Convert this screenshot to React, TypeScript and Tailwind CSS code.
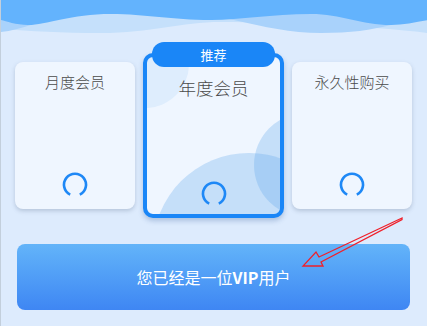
import React from 'react';

const FONT = { fontFamily: '"Noto Sans CJK SC", "Noto Sans", sans-serif' };

function Spinner() {
  // ring with a gap at the bottom
  return (
    <svg width="28" height="28" viewBox="0 0 28 28">
      <path
        d="M9.2 23.6 A11 11 0 1 1 18.8 23.6"
        fill="none"
        stroke="#1e88f6"
        strokeWidth="2.6"
        strokeLinecap="butt"
      />
    </svg>
  );
}

function Waves() {
  return (
    <svg className="absolute left-0 top-0" width="427" height="40" viewBox="0 0 427 40">
      <path d="M0,29 C30,31 60,33 100,33 C150,33 180,22 220,22 C280,22 370,26 427,33 V0 H0 Z" fill="#c5e0fb" />
      <path
        d="M0,32 C10,31 20,28 30,25 C60,16 100,8 150,8 C210,8 260,33 320,33 C350,33 370,30 390,25 C405,21 415,18 427,16 V0 H0 Z"
        fill="#a9d2fb"
      />
      <path
        d="M0,0 H427 V20 C415,22 402,25 390,25 C360,25 340,14 310,14 C270,14 240,20 210,20 C170,20 145,14 110,14 C70,14 45,25 27,25 C15,25 5,21 0,20 Z"
        fill="#63b3fd"
      />
    </svg>
  );
}

function SideCard({ title }: { title: string }) {
  return (
    <div className="flex h-[147px] w-[120px] flex-col items-center rounded-lg bg-[#eff6ff] pb-[10px] pt-[9px] shadow-[0_2px_4px_rgba(90,110,140,0.3)]">
      <span className="text-[15px] font-light text-[#4a4a4a]">{title}</span>
      <div className="mt-auto">
        <Spinner />
      </div>
    </div>
  );
}

export default function App() {
  return (
    <div
      className="relative h-[326px] w-[427px] overflow-hidden border-l border-[#c3cfdc] bg-[#ddebfd]"
      style={FONT}
    >
      <Waves />

      <div className="relative flex items-center gap-[8px] pl-[14px] pt-[53px]">
        <SideCard title="月度会员" />

        <div className="relative h-[165px] w-[141px] rounded-[10px] border-[4px] border-[#1a86f7] bg-[#eff6ff] shadow-[0_3px_5px_rgba(60,100,160,0.3)]">
          <div className="absolute inset-0 overflow-hidden rounded-[6px]">
            <div className="absolute left-[-46px] top-[-37px] h-[88px] w-[88px] rounded-full bg-[rgba(100,170,235,0.12)]" />
            <div className="absolute left-[6px] top-[96px] h-[192px] w-[192px] rounded-full bg-[rgba(100,170,235,0.3)]" />
            <div className="absolute left-[107px] top-[56px] h-[104px] w-[104px] rounded-full bg-[rgba(100,170,235,0.3)]" />
          </div>
          <div className="absolute left-[5px] top-[-15px] flex h-[25px] w-[123px] items-center justify-center rounded-[12px] bg-[#1a86f7] text-[13px] text-white">
            推荐
          </div>
          <div className="relative flex h-full flex-col items-center pb-[6px] pt-[18px]">
            <span className="text-[17.5px] font-light text-[#4a4a4a]">年度会员</span>
            <div className="mt-auto">
              <Spinner />
            </div>
          </div>
        </div>

        <SideCard title="永久性购买" />
      </div>

      <div className="relative ml-[16px] mt-[26px] flex h-[66px] w-[393px] items-center justify-center rounded-lg bg-gradient-to-b from-[#63b4f9] to-[#3f86f3] text-[16px] text-white">
        <span>
          您已经是一位<span className="font-bold">VIP</span>用户
        </span>
      </div>

      <svg className="absolute left-0 top-0" width="427" height="326" viewBox="0 0 427 326">
        <polygon
          points="401,218 318,257 315,252 302,266 322,266 320,262 401,219.5"
          fill="none"
          stroke="#f0202a"
          strokeWidth="1.3"
          strokeLinejoin="miter"
        />
      </svg>
    </div>
  );
}
